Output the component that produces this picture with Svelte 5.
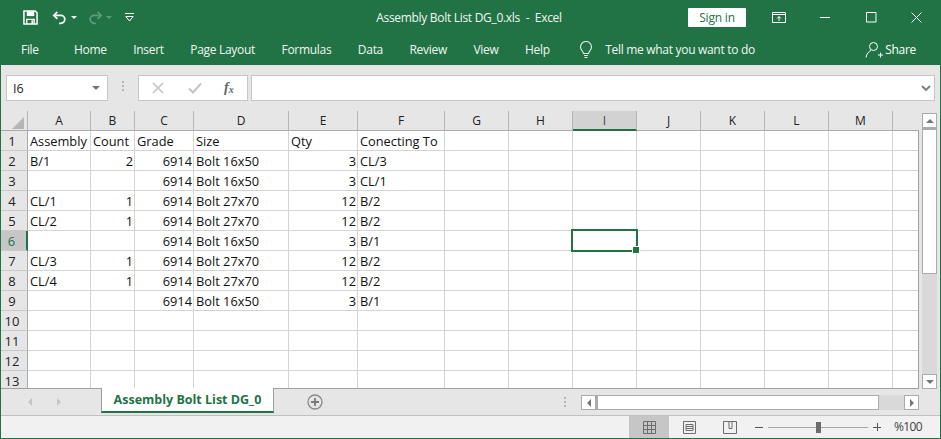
<script>
  const cols = [
    ['A', 63], ['B', 44], ['C', 59], ['D', 95], ['E', 69], ['F', 87],
    ['G', 64], ['H', 64], ['I', 64], ['J', 64], ['K', 64], ['L', 64], ['M', 64], ['', 30]
  ];
  const data = [
    ['Assembly', 'Count', 'Grade', 'Size', 'Qty', 'Conecting To'],
    ['B/1', '2', '6914', 'Bolt 16x50', '3', 'CL/3'],
    ['', '', '6914', 'Bolt 16x50', '3', 'CL/1'],
    ['CL/1', '1', '6914', 'Bolt 27x70', '12', 'B/2'],
    ['CL/2', '1', '6914', 'Bolt 27x70', '12', 'B/2'],
    ['', '', '6914', 'Bolt 16x50', '3', 'B/1'],
    ['CL/3', '1', '6914', 'Bolt 27x70', '12', 'B/2'],
    ['CL/4', '1', '6914', 'Bolt 27x70', '12', 'B/2'],
    ['', '', '6914', 'Bolt 16x50', '3', 'B/1'],
    [], [], [], []
  ];
  const numeric = (r, c) => r > 0 && (c === 1 || c === 2 || c === 4);
  const tracks = cols.map((c) => c[1] + 'px').join(' ');
  const tabs = ['Home', 'Insert', 'Page Layout', 'Formulas', 'Data', 'Review', 'View', 'Help'];
</script>

<div class="win">
  <header class="title">
    <div class="qat">
      <svg width="15" height="15" viewBox="0 0 16 16" class="save"><path d="M1 1h12l2 2v12H1z" fill="none" stroke="#fff" stroke-width="1.6"/><path d="M4 1.500h8v5H4z" fill="#fff"/><path d="M4 15v-5h8v5" fill="none" stroke="#fff" stroke-width="1.400"/><path d="M9 11h2v4H9z" fill="#fff"/></svg>
      <svg width="16" height="14" viewBox="0 0 18 16" class="undo"><path d="M6 1 2 5l4 4" fill="none" stroke="#fff" stroke-width="2"/><path d="M2 5h8a4.500 4.500 0 0 1 0 9H8" fill="none" stroke="#fff" stroke-width="2"/></svg>
      <i class="caret white"></i>
      <svg width="16" height="14" viewBox="0 0 18 16" class="redo"><path d="M12 1l4 4-4 4" fill="none" stroke="#5f9a7c" stroke-width="2"/><path d="M16 5H8a4.500 4.500 0 0 0 0 9h2" fill="none" stroke="#5f9a7c" stroke-width="2"/></svg>
      <i class="caret dim"></i>
      <svg width="9" height="9" viewBox="0 0 9 9" class="custom"><path d="M0 .500h9" stroke="#fff" fill="none"/><path d="M.800 3.500 4.500 8l3.700-4.500z" fill="none" stroke="#fff"/></svg>
    </div>
    <div class="doc">Assembly Bolt List DG_0.xls&nbsp; -&nbsp; Excel</div>
    <div class="wctl">
      <button class="signin">Sign in</button>
      <svg width="14" height="11" viewBox="0 0 14 11" class="w1"><path d="M.500.500h13v10H.500z" fill="none" stroke="#fff"/><path d="M.500 2.500h13" stroke="#fff"/><path d="M7 9V4.500M5 6.500l2-2 2 2" fill="none" stroke="#fff"/></svg>
      <svg width="11" height="11" viewBox="0 0 11 11" class="w2"><path d="M0 5.500h10" stroke="#fff"/></svg>
      <svg width="11" height="11" viewBox="0 0 11 11" class="w3"><path d="M.500.500h9.500v9.500H.500z" fill="none" stroke="#fff"/></svg>
      <svg width="11" height="11" viewBox="0 0 11 11" class="w4"><path d="M.500.500l10 10M10.500.500l-10 10" stroke="#fff"/></svg>
    </div>
  </header>

  <nav class="ribbon">
    <span class="file">File</span>
    {#each tabs as t}<span class="tab">{t}</span>{/each}
    <svg width="14" height="18" viewBox="0 0 14 18" class="bulb"><path d="M4.500 12.500C4 10 1.500 9 1.500 6a5.500 5.500 0 0 1 11 0c0 3-2.500 4-3 6.500z" fill="none" stroke="#e4efe9" stroke-width="1.100"/><path d="M5 14.500h4M5.500 16.500h3" stroke="#e4efe9" stroke-width="1.100"/></svg>
    <span class="tell">Tell me what you want to do</span>
    <span class="share">
      <svg width="19" height="18" viewBox="0 0 19 18"><circle cx="8.500" cy="5.500" r="4" fill="none" stroke="#fff"/><path d="M1 16.500c.5-4 3-6 5-7M13 14h5M15.500 11.500v5" fill="none" stroke="#fff"/></svg>
      Share
    </span>
  </nav>

  <section class="fbar">
    <div class="namebox"><span>I6</span><i class="caret gray"></i></div>
    <div class="dots"><b></b><b></b><b></b></div>
    <div class="fxbox">
      <svg width="12" height="12" viewBox="0 0 12 12"><path d="M1 1l10 10M11 1 1 11" stroke="#c4c4c4" stroke-width="1.600" fill="none"/></svg>
      <svg width="14" height="12" viewBox="0 0 14 12"><path d="M1 6.500 5 10.500 13 1.500" stroke="#c4c4c4" stroke-width="2" fill="none"/></svg>
      <span class="fx">f<sub>x</sub></span>
    </div>
    <div class="finput">
      <svg width="10" height="7" viewBox="0 0 10 7"><path d="M1 1l4 4 4-4" stroke="#7a7a7a" stroke-width="1.800" fill="none"/></svg>
    </div>
  </section>

  <section class="sheet">
    <div class="gridwrap">
      <div class="hdr" style:grid-template-columns="27px {tracks}">
        <div class="corner"><svg width="12" height="12" viewBox="0 0 12 12"><path d="M12 0v12H0z" fill="#b5b5b5"/></svg></div>
        {#each cols as c, i}
          <div class="ch" class:sel={i === 8}>{c[0]}</div>
        {/each}
      </div>
      <div class="body">
        {#each data as row, r}
          <div class="row" class:cut={r === 12} style:grid-template-columns="27px {tracks}">
            <div class="rh" class:rsel={r === 5}>{r + 1}</div>
            {#each cols as _, c}
              <div class="cell" class:num={numeric(r, c)}>{row[c] ?? ''}</div>
            {/each}
          </div>
        {/each}
        <div class="cursor"><i></i></div>
      </div>
    </div>
    <div class="vbar">
      <div class="vbtn"><i class="up"></i></div>
      <div class="vthumb"></div>
      <div class="vtrack"></div>
      <div class="vbtn"><i class="down"></i></div>
    </div>
  </section>

  <section class="tabs">
    <div class="nav"><i class="tl"></i><i class="tr"></i></div>
    <div class="stab">Assembly Bolt List DG_0</div>
    <svg width="16" height="16" viewBox="0 0 16 16" class="add"><circle cx="8" cy="8" r="7" fill="none" stroke="#8a8a8a" stroke-width="1.300"/><path d="M8 4v8M4 8h8" stroke="#7a7a7a" stroke-width="1.800"/></svg>
    <div class="dots h"><b></b><b></b><b></b></div>
    <div class="hbar">
      <div class="hbtn"><i class="l"></i></div>
      <div class="hthumb"></div>
      <div class="htrack"></div>
      <div class="hbtn"><i class="r"></i></div>
    </div>
  </section>

  <footer class="status">
    <div class="view on"><svg width="13" height="13" viewBox="0 0 13 13"><path d="M.500.500h12v12H.500zM.500 4.500h12M.500 8.500h12M4.500.500v12M8.500.500v12" fill="none" stroke="#6d6d6d"/></svg></div>
    <div class="view"><svg width="13" height="13" viewBox="0 0 13 13"><path d="M.500.500h12v12H.500z" fill="none" stroke="#6d6d6d"/><path d="M3 3.500h7v6H3zM3 5.500h7M3 7.500h7" fill="none" stroke="#6d6d6d"/></svg></div>
    <div class="view wide"><svg width="14" height="13" viewBox="0 0 14 13"><path d="M.500.500h13v12H.500zM6 .500V7.500h3V.500" fill="none" stroke="#6d6d6d"/></svg></div>
    <div class="zoom">
      <span class="minus"></span>
      <div class="slider"><span class="knob"></span></div>
      <span class="plus"></span>
    </div>
    <span class="pct">%100</span>
  </footer>
</div>

<style>
  :global(body) { margin: 0; background: #fff; }
  * { box-sizing: border-box; }
  i { display: block; }
  .win {
    width: 941px; height: 439px; overflow: hidden; display: flex; flex-direction: column;
    background: #e6e6e6; font-family: "Open Sans", "Noto Sans", sans-serif; color: #222;
    border-left: 1px solid #217346; border-right: 1px solid #217346; border-bottom: 1px solid #217346;
  }
  .title { height: 33px; background: #217346; display: flex; align-items: center; color: #fff; position: relative; flex: none; }
  .qat { display: flex; align-items: center; width: 266px; padding-top: 2px; }
  .save { margin-left: 22px; }
  .undo { margin-left: 14px; }
  .caret { width: 0; height: 0; border-left: 3px solid transparent; border-right: 3px solid transparent; border-top: 3px solid #fff; }
  .caret.white { margin-left: 3px; }
  .caret.dim { border-top-color: #5f9a7c; margin-left: 3px; }
  .redo { margin-left: 10px; }
  .custom { margin-left: 13px; }
  .doc { flex: 1; text-align: center; font-size: 12px; letter-spacing: -0.3px; margin-left: -17px; padding-top: 1px; color: #f0f6f3; }
  .wctl { display: flex; align-items: center; height: 100%; padding-top: 1px; }
  .signin { width: 58px; height: 19px; padding: 0; border: 0; background: #fff; color: #217346; font: 12px "Open Sans", sans-serif; letter-spacing: -0.2px; margin-right: 26px; border-radius: 1px; }
  .w2 { margin-left: 34px; }
  .w3 { margin-left: 35px; }
  .w4 { margin-left: 34px; margin-right: 18px; }

  .ribbon { height: 32px; background: #217346; display: flex; align-items: center; color: #f0f6f3; font-size: 12px; letter-spacing: -0.3px; flex: none; padding-top: 1px; }
  .file { margin-left: 20px; width: 53px; }
  .tab { margin-right: 26.500px; }
  .bulb { margin-left: 3px; }
  .tell { margin-left: 12px; }
  .share { margin-left: auto; margin-right: 24px; display: flex; align-items: center; gap: 1px; color: #fff; }

  .fbar { height: 46px; flex: none; display: flex; align-items: flex-start; padding: 10px 5px 0 5px; background: #e6e6e6; }
  .namebox { width: 102px; height: 26px; background: #fff; border: 1px solid #c6c6c6; display: flex; align-items: center; justify-content: space-between; padding: 0 7px 0 6px; font-size: 12.500px; }
  .caret.gray { border-left-width: 4px; border-right-width: 4px; border-top: 4px solid #777; }
  .dots { width: 30px; display: flex; flex-direction: column; align-items: center; gap: 2px; padding-top: 6px; }
  .dots b { width: 2px; height: 2px; background: #b4b4b4; display: block; }
  .fxbox { width: 110px; height: 26px; background: #fff; border: 1px solid #c6c6c6; display: flex; align-items: center; padding-left: 13px; }
  .fxbox svg:nth-child(2) { margin-left: 24px; }
  .fx { margin-left: 22px; font: italic bold 14px "Liberation Serif", serif; color: #666; }
  .fx sub { font-size: 10px; vertical-align: -1px; line-height: 0; }
  .finput { flex: 1; margin-left: 3px; height: 26px; background: #fff; border: 1px solid #c6c6c6; display: flex; align-items: center; justify-content: flex-end; padding-right: 3px; }

  .sheet { flex: none; height: 278px; display: flex; background: #e6e6e6; }
  .gridwrap { width: 918px; position: relative; overflow: hidden; }
  .hdr { display: grid; height: 20px; border-bottom: 1px solid #ababab; }
  .corner { border-right: 1px solid #b5b5b5; display: flex; align-items: flex-end; justify-content: flex-end; padding: 0 3px 2px 0; }
  .ch { border-right: 1px solid #b5b5b5; font-size: 12px; text-align: center; line-height: 19px; color: #222; }
  .ch:last-child { border-right: 0; }
  .ch.sel { background: #d2d2d2; border-bottom: 2px solid #217346; height: 20px; color: #444; }
  .body { position: relative; background: #fff; overflow: hidden; border-right: 1px solid #a0a0a0; border-bottom: 1px solid #a0a0a0; }
  .row { display: grid; height: 20px; }
  .row.cut { height: 17px; }
  .rh { background: #e6e6e6; border-right: 1px solid #ababab; border-bottom: 1px solid #c9c9c9; font-size: 13px; text-align: center; line-height: 18px; padding-top: 1px; color: #222; padding-right: 4px; }
  .row.cut .rh { line-height: 14px; padding-top: 3px; border-bottom: 0; }
  .rh.rsel { background: #c6c6c6; color: #217346; border-right: 2px solid #217346; }
  .cell { border-right: 1px solid #d4d4d4; border-bottom: 1px solid #d4d4d4; font-size: 12.800px; line-height: 17px; padding: 2px 1px 0 2px; white-space: nowrap; overflow: hidden; color: #111; background: #fff; }
  .row.cut .cell { border-bottom: 0; }
  .cell:last-child { border-right: 0; }
  .cell.num { text-align: right; }
  .cursor { position: absolute; left: 570px; top: 98px; width: 67px; height: 23px; border: 2px solid #217346; }
  .cursor i { position: absolute; right: -3px; bottom: -3px; width: 6px; height: 6px; background: #217346; outline: 1px solid #fff; }

  .vbar { width: 15px; display: flex; flex-direction: column; padding-top: 2px; margin-left: 3px; }
  .vbtn { width: 15px; height: 15px; background: #fff; border: 1px solid #ababab; display: flex; align-items: center; justify-content: center; flex: none; }
  .up { width: 0; height: 0; border: 4px solid transparent; border-top: 0; border-bottom: 4px solid #777; }
  .down { width: 0; height: 0; border: 4px solid transparent; border-bottom: 0; border-top: 4px solid #777; }
  .vthumb { width: 15px; height: 146px; background: #fff; border: 1px solid #ababab; border-top: 2px solid #ababab; flex: none; }
  .vtrack { width: 15px; flex: 1; background: #d9d9d9; }

  .tabs { height: 27px; flex: none; display: flex; align-items: flex-start; background: #e6e6e6; border-bottom: 1px solid #c0c0c0; position: relative; }
  .nav { width: 100px; display: flex; gap: 25px; padding: 9px 0 0 27px; }
  .tl { width: 0; height: 0; border: 4px solid transparent; border-left: 0; border-right: 4px solid #c4c4c4; }
  .tr { width: 0; height: 0; border: 4px solid transparent; border-right: 0; border-left: 4px solid #c4c4c4; }
  .stab { width: 173px; height: 25px; margin-top: -1px; background: #fff; border-left: 1px solid #9c9c9c; border-right: 1px solid #9c9c9c; border-bottom: 2px solid #217346; color: #217346; font-weight: 700; font-size: 12.500px; text-align: center; line-height: 24px; white-space: nowrap; }
  .add { margin: 5px 0 0 33px; }
  .dots.h { width: 14px; margin-left: 235px; padding-top: 8px; }
  .hbar { margin: 6px 0 0 9px; display: flex; width: 338px; height: 15px; }
  .hbtn { width: 15px; height: 15px; background: #fff; border: 1px solid #ababab; display: flex; align-items: center; justify-content: center; flex: none; }
  .l { width: 0; height: 0; border: 4px solid transparent; border-left: 0; border-right: 4px solid #777; }
  .r { width: 0; height: 0; border: 4px solid transparent; border-right: 0; border-left: 4px solid #777; }
  .hthumb { width: 283px; background: #fff; border: 1px solid #ababab; border-left: 2px solid #ababab; flex: none; }
  .htrack { flex: 1; background: #d9d9d9; }

  .status { flex: 1; background: #f1f1f1; display: flex; align-items: stretch; padding-left: 628px; font-size: 12px; color: #444; }
  .view { width: 40px; display: flex; align-items: center; justify-content: center; }
  .view.wide { width: 41px; }
  .view.on { background: #c6c6c6; }
  .zoom { display: flex; align-items: center; margin-left: 5px; }
  .minus { width: 8px; height: 1px; background: #555; }
  .slider { width: 100px; height: 1px; background: #a8a8a8; margin: 0 5px; position: relative; }
  .knob { position: absolute; left: 48px; top: -5px; width: 5px; height: 11px; background: #6d6d6d; }
  .plus { width: 8px; height: 8px; background: linear-gradient(#555, #555) center / 100% 1px no-repeat, linear-gradient(#555, #555) center / 1px 100% no-repeat; }
  .pct { margin-left: 13px; line-height: 21px; letter-spacing: -0.6px; }
</style>
